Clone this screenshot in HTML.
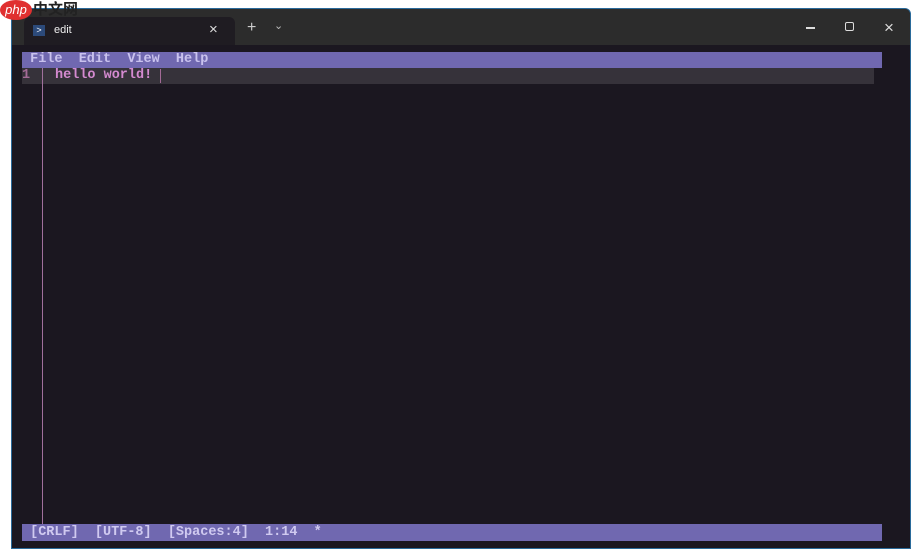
<!DOCTYPE html>
<html><head><style>
body{margin:0;width:918px;height:555px;background:#fff;position:relative;overflow:hidden;font-family:"Liberation Sans",sans-serif}
.win{position:absolute;left:11px;top:8px;width:900px;height:541px;background:#1b1720;border:1px solid #2a6a9a;border-radius:6px 6px 0 0;box-sizing:border-box;overflow:hidden}
.title{position:absolute;left:0;top:0;right:0;height:36px;background:#2c2c2c}
.tab{position:absolute;left:12px;top:8px;width:211px;height:28px;background:#1f1c22;border-radius:6px 6px 0 0}
.mono{font-family:"Liberation Mono",monospace;font-weight:bold;font-size:13.5px}
.menu{position:absolute;left:10px;top:43px;width:860px;height:16px;background:#7068b0;color:#c9c2ee;line-height:16px}
.line{position:absolute;left:10px;top:59px;width:852px;height:16px;background:#36323a;line-height:16px}
.status{position:absolute;left:10px;top:515px;width:860px;height:17px;background:#7068b0;color:#d0caf0;line-height:17px}
.vl{position:absolute;left:30px;top:59px;width:1px;height:457px;background:#a0709c}
</style></head><body>
<div class="win">
 <div class="title">
  <div class="tab">
   <div style="position:absolute;left:9px;top:8px;width:12px;height:11px;background:#2c4a7a;color:#fff;font-size:9px;line-height:11px;text-align:center">&gt;</div>
   <div style="position:absolute;left:30px;top:7px;color:#eee;font-size:11px">edit</div>
   <div style="position:absolute;left:185px;top:4px;color:#ddd;font-size:15px">×</div>
  </div>
  <div style="position:absolute;left:235px;top:10px;color:#ccc;font-size:16px">+</div>
  <div style="position:absolute;left:262px;top:10px;color:#bbb;font-size:11px">⌄</div>
  <div style="position:absolute;left:794px;top:18px;width:9px;height:1.5px;background:#ddd"></div>
  <div style="position:absolute;left:833px;top:13px;width:7px;height:7px;border:1.5px solid #ddd;border-radius:2px"></div>
  <div style="position:absolute;left:872px;top:9px;color:#ddd;font-size:17px">×</div>
 </div>
 <div class="menu mono">&nbsp;File&nbsp; Edit&nbsp; View&nbsp; Help</div>
 <div class="line mono"><span style="color:#a36a96">1</span><span style="color:#d48ad0;position:absolute;left:33px">hello world!</span><span style="position:absolute;left:138px;top:1px;width:1px;height:14px;background:#a36a96"></span></div>
 <div class="vl"></div>
 <div class="status mono">&nbsp;[CRLF]&nbsp; [UTF-8]&nbsp; [Spaces:4]&nbsp; 1:14&nbsp; *</div>
</div>
<div style="position:absolute;left:0;top:0;width:32px;height:20px;border-radius:50%;background:#e03030;color:#fff;font-style:italic;font-size:13px;line-height:20px;text-align:center">php</div>
<div style="position:absolute;left:33px;top:-1px;font-family:'Noto Sans CJK SC',sans-serif;font-size:15px;line-height:20px;color:#222;font-weight:bold">中文网</div>
</body></html>
